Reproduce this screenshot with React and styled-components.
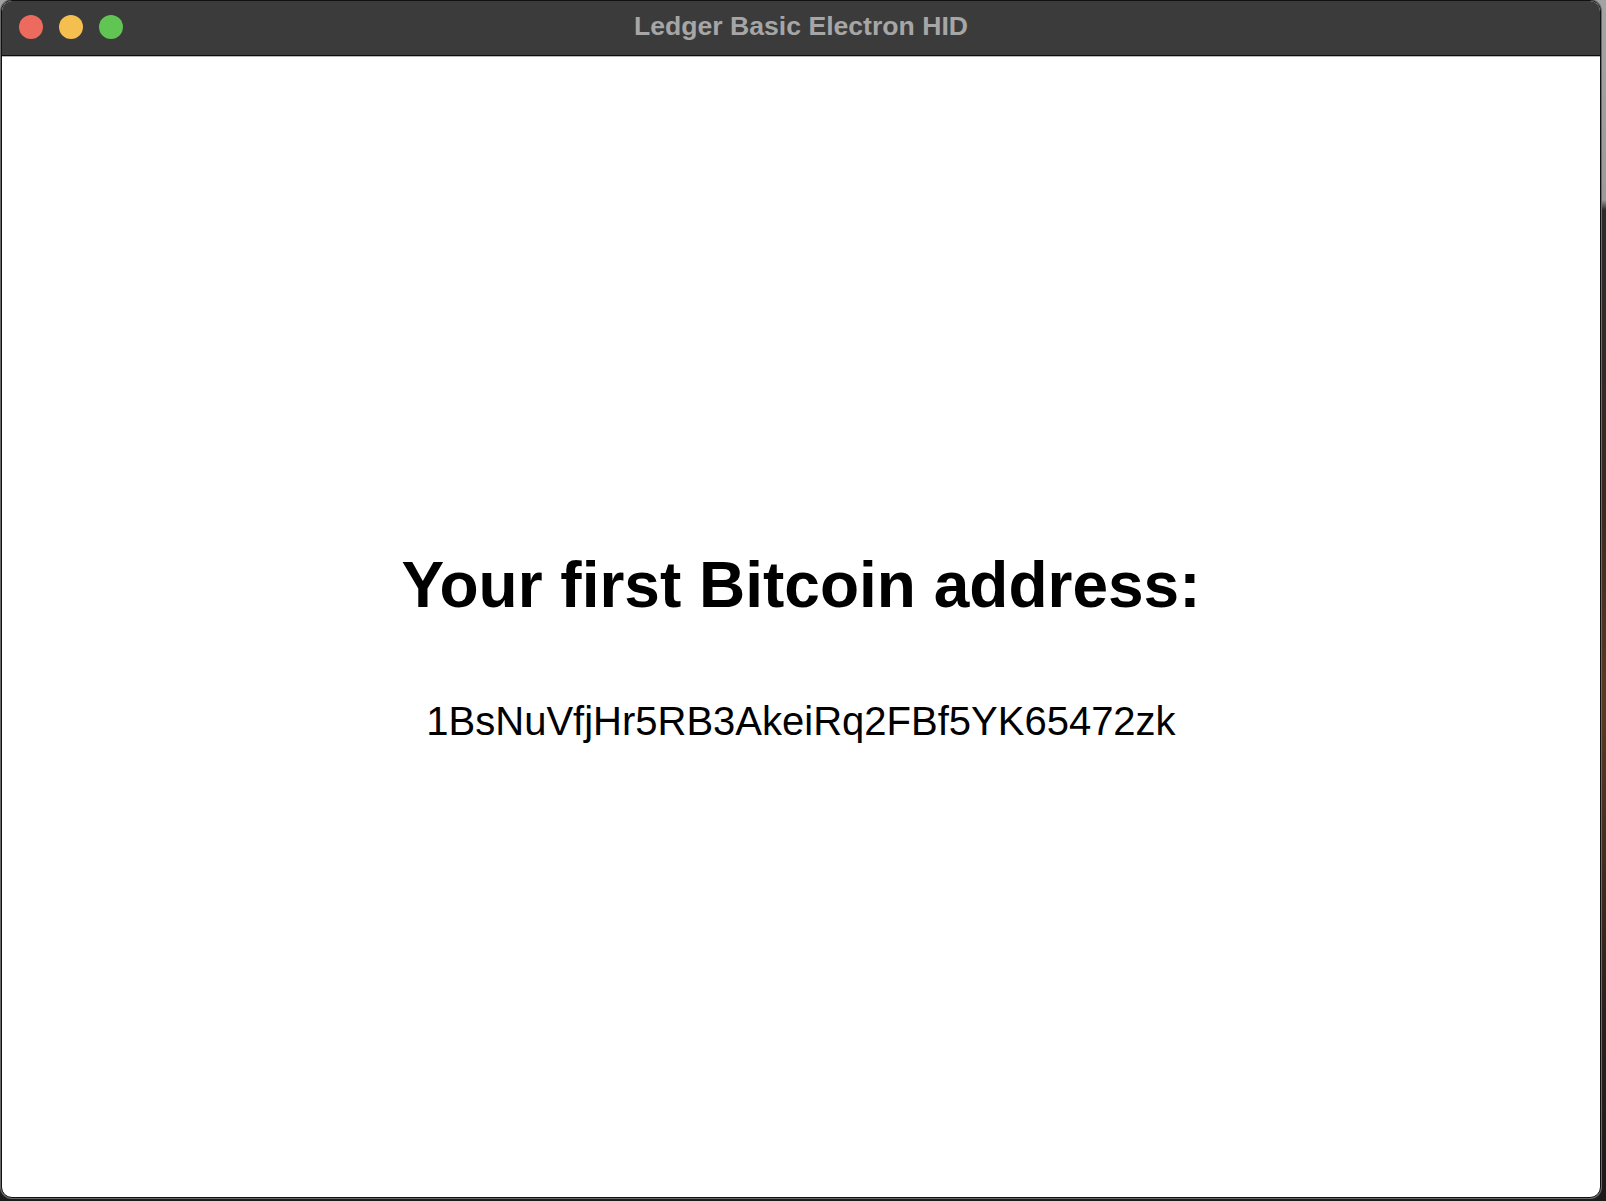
import React from 'react';
import styled, { createGlobalStyle } from 'styled-components';

const GlobalStyle = createGlobalStyle`
    html, body {
        margin: 0;
        padding: 0;
        height: 100%;
    }

    body {
        width: 1606px;
        height: 1201px;
        overflow: hidden;
        background: linear-gradient(180deg, #a3a3a3 0px, #9a9a9a 200px, #2c2a2c 210px, #3b2a20 500px, #5a3a24 700px, #2d221c 1000px, #1d1a1a 1201px);
        font-family: 'Liberation Sans', Arial, Helvetica, sans-serif;
    }
`;

const Window = styled.div`
    width: 1600px;
    height: 1198px;
    margin-left: 1px;
    box-sizing: border-box;
    border: 1px solid #111;
    border-radius: 11px;
    overflow: hidden;
    display: flex;
    flex-direction: column;
    background: #fff;
    box-shadow: 0 0 0 1px #6a6a6a;
`;

const TitleBar = styled.div`
    position: relative;
    height: 54px;
    flex-shrink: 0;
    background: #3b3b3b;
    border-bottom: 1px solid #0c0c0c;
    display: flex;
    align-items: center;
    justify-content: center;
`;

const Lights = styled.div`
    position: absolute;
    left: 17px;
    top: 14px;
    display: flex;
    gap: 16px;
`;

const Light = styled.span`
    width: 24px;
    height: 24px;
    border-radius: 50%;
    background: ${(p) => p.color};
`;

const Title = styled.div`
    font-size: 26.6px;
    font-weight: bold;
    color: #a6a6a6;
    line-height: 50px;
    padding-bottom: 4px;
`;

const Content = styled.main`
    flex: 1;
    border-top: 1px solid #b9b9b9;
    display: flex;
    flex-direction: column;
    align-items: center;
    padding-top: 496px;
    color: #000;
`;

const Heading = styled.h1`
    margin: 0;
    font-size: 64px;
    line-height: 64px;
    font-weight: bold;
`;

const Address = styled.p`
    margin: 84px 0 0;
    font-size: 40px;
    line-height: 40px;
`;

const App = () => {
    return (
        <>
            <GlobalStyle />
            <Window>
                <TitleBar>
                    <Lights>
                        <Light color="#ec6a5e" />
                        <Light color="#f4bf4f" />
                        <Light color="#61c554" />
                    </Lights>
                    <Title>Ledger Basic Electron HID</Title>
                </TitleBar>
                <Content>
                    <Heading>Your first Bitcoin address:</Heading>
                    <Address>1BsNuVfjHr5RB3AkeiRq2FBf5YK65472zk</Address>
                </Content>
            </Window>
        </>
    );
};

export default App;
